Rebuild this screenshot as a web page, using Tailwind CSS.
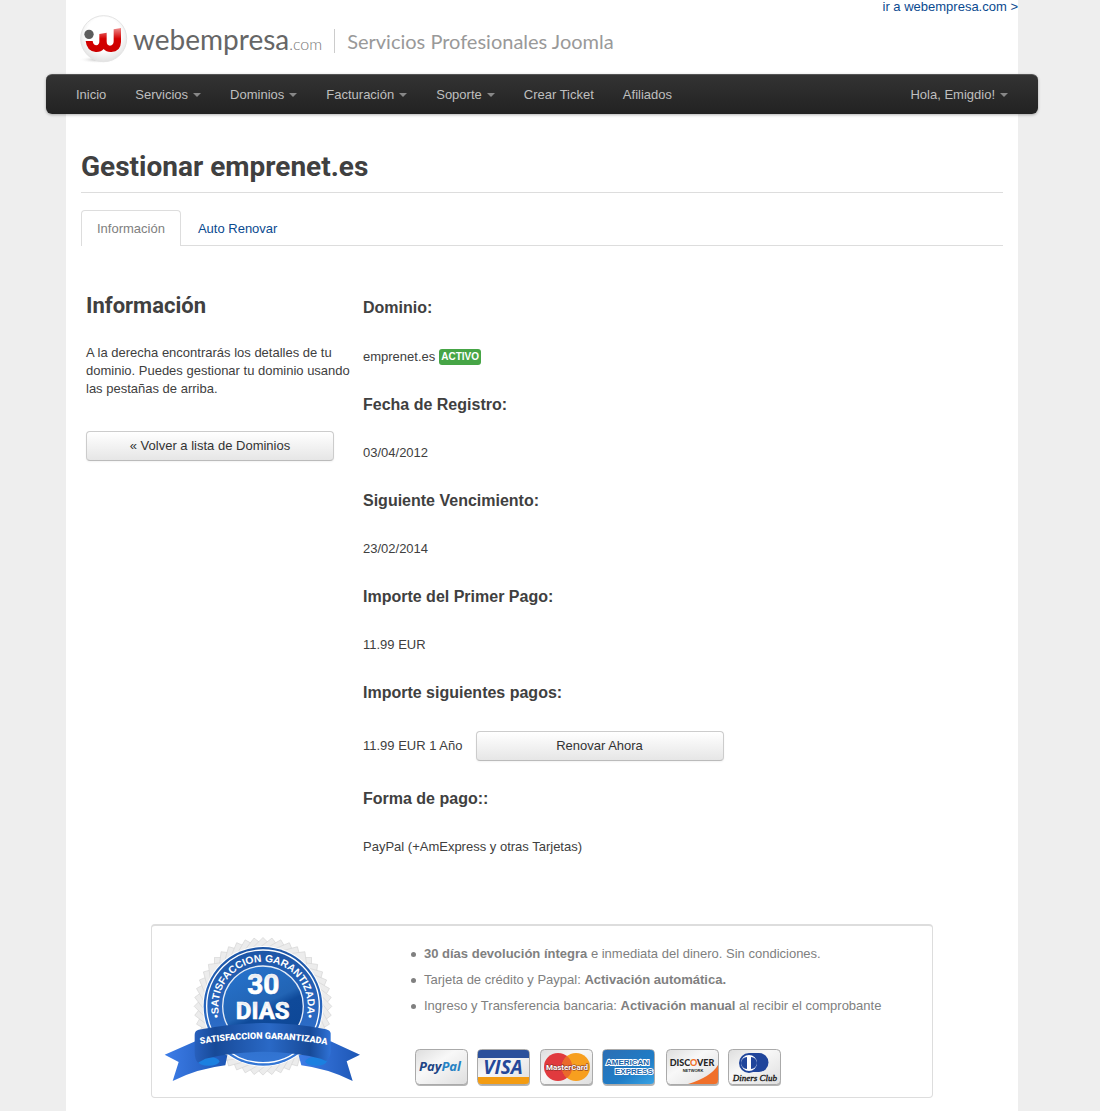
<!DOCTYPE html>
<html lang="es">
<head>
  <meta charset="UTF-8" />
  <meta name="viewport" content="width=device-width, initial-scale=1" />
  <title>Gestionar emprenet.es - Webempresa</title>
  <script src="https://cdn.jsdelivr.net/npm/@tailwindcss/browser@4"></script>
</head>
<body class="bg-[#eeeeee] pr-4 font-['Liberation_Sans',Arial,sans-serif] text-[13px] leading-[18px] text-[#404040]">
  <div class="w-full max-w-[952px] min-h-screen mx-auto bg-white pb-3.5">

    <!-- Header -->
    <header class="flex items-start justify-between h-[74px]">
      <a href="#" class="flex items-center pl-3 pt-3">
        <svg class="w-[52px] h-[54px] shrink-0" viewBox="0 0 156 162">
          <defs>
            <radialGradient id="ball" cx="50%" cy="40%" r="60%">
              <stop offset="0.6" stop-color="#ffffff" />
              <stop offset="1" stop-color="#e2e2e2" />
            </radialGradient>
            <linearGradient id="red" x1="0" y1="0" x2="0" y2="1">
              <stop offset="0" stop-color="#ee8a8a" />
              <stop offset="0.45" stop-color="#d40000" />
              <stop offset="1" stop-color="#cc0000" />
            </linearGradient>
            <radialGradient id="floor">
              <stop offset="0" stop-color="#b5b5b5" />
              <stop offset="1" stop-color="#ffffff" stop-opacity="0" />
            </radialGradient>
          </defs>
          <ellipse cx="60" cy="143" rx="58" ry="11" fill="url(#floor)" />
          <circle cx="77" cy="80" r="69" fill="url(#ball)" stroke="#e4e4e4" stroke-width="3" />
          <circle cx="33" cy="67" r="14" fill="#5c5c5c" />
          <path d="M23 87H44Q46 100 55 100Q64 99 64 88V66L86 62V88Q86 101 96 101Q107 100 107 88V52L129 48V90Q128 119 100 120Q85 121 77 111Q69 121 53 120Q26 117 23 87Z" fill="url(#red)" />
        </svg>
        <span class="pl-[3px] pt-1 font-['Lato',sans-serif] text-[28px] leading-9 text-[#666666]">webempresa<span class="text-[16px] font-light text-[#777777]">.com</span></span>
        <span class="mt-1 ml-3 pl-3 border-l border-[#cccccc] font-['Lato',sans-serif] text-[20px] leading-6 text-[#999999]">Servicios Profesionales Joomla</span>
      </a>
      <a href="#" class="leading-[14px] text-[#0a4a8f]">ir a webempresa.com &gt;</a>
    </header>

    <!-- Navbar -->
    <nav class="-mx-5 flex justify-between h-10 px-[30px] rounded-md bg-linear-to-b from-[#333333] to-[#222222] border-t border-[#555555] shadow-[0_1px_3px_rgba(0,0,0,0.3)] text-[#bfbfbf]">
      <ul class="flex items-center gap-[29px]">
        <li><a href="#">Inicio</a></li>
        <li><a href="#" class="flex items-center gap-[5px]">Servicios <span class="border-x-4 border-t-4 border-x-transparent border-t-[#888888]"></span></a></li>
        <li><a href="#" class="flex items-center gap-[5px]">Dominios <span class="border-x-4 border-t-4 border-x-transparent border-t-[#888888]"></span></a></li>
        <li><a href="#" class="flex items-center gap-[5px]">Facturación <span class="border-x-4 border-t-4 border-x-transparent border-t-[#888888]"></span></a></li>
        <li><a href="#" class="flex items-center gap-[5px]">Soporte <span class="border-x-4 border-t-4 border-x-transparent border-t-[#888888]"></span></a></li>
        <li><a href="#">Crear Ticket</a></li>
        <li><a href="#">Afiliados</a></li>
      </ul>
      <a href="#" class="flex items-center gap-[5px]">Hola, Emigdio! <span class="border-x-4 border-t-4 border-x-transparent border-t-[#888888]"></span></a>
    </nav>

    <main class="px-[15px] pt-[35px]">
      <h1 class="pb-[7px] border-b border-[#dddddd] font-['Roboto',sans-serif] font-bold text-[28px] leading-9">Gestionar emprenet.es</h1>

      <!-- Tabs -->
      <ul class="mt-[17px] flex border-b border-[#dddddd]">
        <li class="-mb-px"><a href="#" class="block px-[15px] pt-[9px] h-9 rounded-t border border-b-0 border-[#dddddd] bg-white text-[#808080]">Información</a></li>
        <li><a href="#" class="block px-[17px] pt-2.5 pb-[7px] text-[#0a4a8f]">Auto Renovar</a></li>
      </ul>

      <div class="flex pl-[5px] pt-11">
        <section class="w-[277px] shrink-0">
          <h2 class="font-['Roboto',sans-serif] font-bold text-[22px] leading-8">Información</h2>
          <p class="mt-[22px]">A la derecha encontrarás los detalles de tu dominio. Puedes gestionar tu dominio usando las pestañas de arriba.</p>
          <button type="button" class="mt-[33px] w-[248px] h-[30px] rounded border border-[#cccccc] border-b-[#bbbbbb] bg-linear-to-b from-white to-[#e6e6e6] text-[#333333] shadow-[0_1px_2px_rgba(0,0,0,0.05)]">« Volver a lista de Dominios</button>
        </section>

        <!-- Domain details -->
        <dl class="grow">
          <dt class="font-bold text-base leading-9">Dominio:</dt>
          <dd class="my-[21px] flex items-center gap-1 h-[19px]">emprenet.es <span class="px-0.5 rounded-[3px] bg-[#46a546] text-[10px] leading-4 font-bold text-white">ACTIVO</span></dd>
          <dt class="font-bold text-base leading-9">Fecha de Registro:</dt>
          <dd class="my-[21px]">03/04/2012</dd>
          <dt class="font-bold text-base leading-9">Siguiente Vencimiento:</dt>
          <dd class="my-[21px]">23/02/2014</dd>
          <dt class="font-bold text-base leading-9">Importe del Primer Pago:</dt>
          <dd class="my-[21px]">11.99 EUR</dd>
          <dt class="font-bold text-base leading-9">Importe siguientes pagos:</dt>
          <dd class="my-5 flex items-center gap-[13px]">11.99 EUR 1 Año
            <button type="button" class="w-[248px] h-[30px] rounded border border-[#cccccc] border-b-[#bbbbbb] bg-linear-to-b from-white to-[#e6e6e6] text-[#333333] shadow-[0_1px_2px_rgba(0,0,0,0.05)]">Renovar Ahora</button>
          </dd>
          <dt class="font-bold text-base leading-9">Forma de pago::</dt>
          <dd class="mt-[21px]">PayPal (+AmExpress y otras Tarjetas)</dd>
        </dl>
      </div>

      <!-- Guarantee box -->
      <section class="mt-[68px] mx-[70px] flex items-start gap-[54px] pl-3 pt-2.5 pb-2.5 rounded border border-t-2 border-[#dddddd] text-[#808080]">
        <svg class="w-[197px] h-[147px] shrink-0" viewBox="0 0 591 441" font-family="Roboto, sans-serif" font-weight="bold">
          <defs>
            <linearGradient id="ring" x1="0" y1="0" x2="0" y2="1">
              <stop offset="0" stop-color="#1c55a5" />
              <stop offset="1" stop-color="#3477d6" />
            </linearGradient>
            <linearGradient id="disc" x1="0.2" y1="0" x2="0.7" y2="1">
              <stop offset="0" stop-color="#2672cc" />
              <stop offset="0.5" stop-color="#2264b4" />
              <stop offset="0.6" stop-color="#0f4a9a" />
              <stop offset="1" stop-color="#0d4797" />
            </linearGradient>
            <linearGradient id="band" x1="0" y1="0" x2="1" y2="0">
              <stop offset="0" stop-color="#2860bd" />
              <stop offset="0.15" stop-color="#174a98" />
              <stop offset="0.55" stop-color="#2a69c6" />
              <stop offset="0.85" stop-color="#174a98" />
              <stop offset="1" stop-color="#2f72d6" />
            </linearGradient>
            <linearGradient id="tail" x1="0" y1="0" x2="1" y2="0">
              <stop offset="0" stop-color="#3d7de8" />
              <stop offset="1" stop-color="#1d56b4" />
            </linearGradient>
            <linearGradient id="silver" x1="0" y1="0" x2="0" y2="1">
              <stop offset="0" stop-color="#d4dae4" />
              <stop offset="0.5" stop-color="#ffffff" />
              <stop offset="1" stop-color="#ffffff" />
            </linearGradient>
            <rect id="sq" x="151" y="65" width="292" height="292" />
            <path id="arc" d="M177 271A134 134 0 1 1 417 271" />
            <path id="bandline" d="M100 326Q297 290 498 328" />
          </defs>
          <!-- serrated edge -->
          <g fill="#ececec" stroke="#d6d6d6" stroke-width="2">
            <use href="#sq" />
            <use href="#sq" transform="rotate(7.5 297 211)" />
            <use href="#sq" transform="rotate(15 297 211)" />
            <use href="#sq" transform="rotate(22.5 297 211)" />
            <use href="#sq" transform="rotate(30 297 211)" />
            <use href="#sq" transform="rotate(37.5 297 211)" />
            <use href="#sq" transform="rotate(45 297 211)" />
            <use href="#sq" transform="rotate(52.5 297 211)" />
            <use href="#sq" transform="rotate(60 297 211)" />
            <use href="#sq" transform="rotate(67.5 297 211)" />
            <use href="#sq" transform="rotate(75 297 211)" />
            <use href="#sq" transform="rotate(82.5 297 211)" />
          </g>
          <circle cx="297" cy="211" r="181" fill="#ffffff" />
          <circle cx="297" cy="211" r="178" fill="url(#ring)" />
          <circle cx="297" cy="211" r="169" fill="none" stroke="#ffffff" stroke-width="4" />
          <circle cx="297" cy="211" r="121" fill="url(#disc)" stroke="#e4ecf7" stroke-width="4" />
          <text font-family="Liberation Sans, sans-serif" font-size="31" fill="#ffffff" text-anchor="middle"><textPath href="#arc" startOffset="50%">•SATISFACCION GARANTIZADA•</textPath></text>
          <g fill="url(#silver)" stroke="#ffffff" stroke-width="2" text-anchor="middle">
            <text x="298" y="174" font-size="84">30</text>
            <text x="296" y="249" font-size="72">DIAS</text>
          </g>
          <!-- ribbon -->
          <path d="M2 356L94 316L150 352L190 358L184 388Q100 398 26 435L44 378Z" fill="url(#tail)" />
          <path d="M588 356L500 316L440 352L404 358L412 388Q492 398 566 435L548 376Z" fill="url(#tail)" />
          <ellipse cx="134" cy="376" rx="32" ry="13" fill="#1b80e0" />
          <ellipse cx="456" cy="376" rx="32" ry="13" fill="#1b80e0" />
          <path d="M92 296Q92 284 104 281Q297 242 486 280Q499 283 500 292V348Q500 362 486 375L470 368Q297 327 124 368L102 380Q92 370 92 350Z" fill="url(#band)" />
          <text font-size="27" font-weight="900" fill="#ffffff" text-anchor="middle"><textPath href="#bandline" startOffset="50%">SATISFACCION GARANTIZADA</textPath></text>
        </svg>

        <div class="pt-[5px]">
          <ul class="-ml-1 leading-[26px]">
            <li class="before:inline-block before:size-[5px] before:mr-2 before:rounded-full before:bg-[#808080] before:align-middle"><strong>30 días devolución íntegra</strong> e inmediata del dinero. Sin condiciones.</li>
            <li class="before:inline-block before:size-[5px] before:mr-2 before:rounded-full before:bg-[#808080] before:align-middle">Tarjeta de crédito y Paypal: <strong>Activación automática.</strong></li>
            <li class="before:inline-block before:size-[5px] before:mr-2 before:rounded-full before:bg-[#808080] before:align-middle">Ingreso y Transferencia bancaria: <strong>Activación manual</strong> al recibir el comprobante</li>
          </ul>

          <!-- Accepted cards -->
          <svg class="mt-[30px] w-[368px] h-[38px]" viewBox="0 0 368 38" font-family="Liberation Sans, sans-serif" font-weight="bold">
            <defs>
              <linearGradient id="plate" x1="0" y1="0" x2="1" y2="1">
                <stop offset="0" stop-color="#dddddd" />
                <stop offset="0.4" stop-color="#f8f8f8" />
                <stop offset="1" stop-color="#dedede" />
              </linearGradient>
              <linearGradient id="amex" x1="0" y1="0" x2="1" y2="1">
                <stop offset="0" stop-color="#2c6fb4" />
                <stop offset="0.6" stop-color="#1f7cc6" />
                <stop offset="1" stop-color="#39a3e4" />
              </linearGradient>
              <clipPath id="cut"><rect x="1" y="1" width="51" height="34" rx="3" /></clipPath>
              <g id="card">
                <rect x="1" y="2" width="52" height="35" rx="4" fill="#b5b5b5" />
                <rect x="0.5" y="0.5" width="52" height="35" rx="4" fill="url(#plate)" stroke="#aaaaaa" />
              </g>
            </defs>
            <g>
              <use href="#card" />
              <text x="4" y="22" font-family="Open Sans, sans-serif" font-style="italic" font-size="13" fill="#1d4585">Pay<tspan fill="#2582c4">Pal</tspan></text>
            </g>
            <g transform="translate(62 0)">
              <use href="#card" />
              <g clip-path="url(#cut)">
                <rect width="53" height="9" fill="#2b509b" />
                <rect y="28" width="53" height="9" fill="#f39c12" />
              </g>
              <text x="26" y="25" font-family="Open Sans, sans-serif" font-style="italic" font-size="19" fill="#24489a" text-anchor="middle">VISA</text>
            </g>
            <g transform="translate(125 0)">
              <use href="#card" />
              <circle cx="18" cy="18" r="14" fill="#e03a3e" />
              <circle cx="36" cy="18" r="14" fill="#f79f1f" />
              <path d="M27 7A14 14 0 0 1 27 29A14 14 0 0 1 27 7Z" fill="#ea6a2b" />
              <text x="27" y="21" font-family="Roboto, sans-serif" font-size="8" fill="#ffffff" stroke="#7b2d25" stroke-width="1" paint-order="stroke" text-anchor="middle">MasterCard</text>
            </g>
            <g transform="translate(187 0)">
              <use href="#card" />
              <rect x="1" y="1" width="51" height="34" rx="3" fill="url(#amex)" />
              <g font-size="8" fill="#1b63a8" stroke="#ffffff" stroke-width="2" paint-order="stroke">
                <text x="4" y="16">AMERICAN</text>
                <text x="13" y="25">EXPRESS</text>
              </g>
            </g>
            <g transform="translate(251 0)">
              <use href="#card" />
              <path d="M52 16Q45 28 22 35H49Q52 35 52 31Z" fill="#f0702a" />
              <text x="26" y="17" font-family="Lato, sans-serif" font-size="9" font-weight="900" fill="#262626" text-anchor="middle">DISC<tspan fill="#f0702a">O</tspan>VER</text>
              <text x="27" y="23" font-size="4" fill="#262626" text-anchor="middle">NETWORK</text>
            </g>
            <g transform="translate(313 0)">
              <use href="#card" />
              <path d="M21 4H31A9 9 0 0 1 31 23H21Z" fill="#20459b" />
              <circle cx="21" cy="14" r="9" fill="#ffffff" stroke="#20459b" stroke-width="2" />
              <path d="M19 8A6 6 0 0 0 19 20ZM23 8A6 6 0 0 1 23 20Z" fill="#20459b" />
              <text x="27" y="32" font-family="Liberation Serif, serif" font-style="italic" font-weight="normal" font-size="9" fill="#111111" stroke="#111111" stroke-width="0.3" text-anchor="middle">Diners Club</text>
            </g>
          </svg>
        </div>
      </section>
    </main>
  </div>
</body>
</html>
